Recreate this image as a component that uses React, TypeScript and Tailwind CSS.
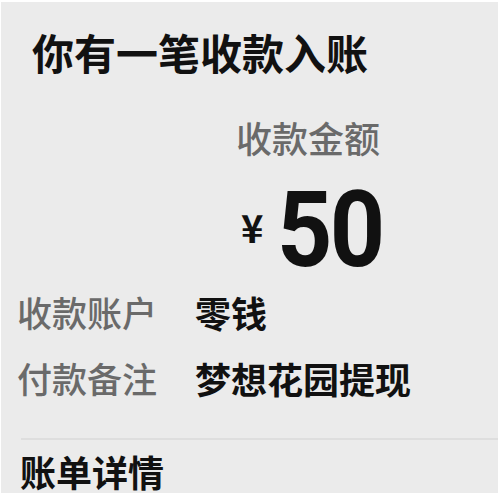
import React from "react";

const cjk = { fontFamily: '"Noto Sans CJK SC", "Noto Sans", sans-serif' };

export default function App() {
  return (
    <div className="w-[500px] h-[496px] bg-white">
      <div
        className="ml-[1px] mt-[2px] mr-[2px] h-[491px] bg-[#ebebeb] flex flex-col text-[#111111]"
        style={cjk}
      >
        <div className="pl-[31px] pt-[26px] text-[42px] leading-[48px] font-bold">
          你有一笔收款入账
        </div>

        <div className="pl-[235px] mt-[39px] text-[36px] leading-[44px] font-medium text-[#6a6a6a]">
          收款金额
        </div>

        <div className="pl-[240px] mt-[32px] h-[80px] flex items-center">
          <span className="mb-[8px] text-[38px] leading-none font-bold">¥</span>
          <span
            className="ml-[14px] text-[105px] leading-[80px] font-bold tracking-[-3px] inline-block origin-left scale-x-[0.92]"
            style={{ fontFamily: 'Roboto, "Liberation Sans", sans-serif' }}
          >
            50
          </span>
        </div>

        <div className="mt-[19px] flex flex-col gap-[22px] pl-[16px]">
          <div className="flex h-[44px] items-center">
            <span className="w-[178px] text-[35px] leading-[44px] font-medium text-[#6a6a6a]">收款账户</span>
            <span className="text-[36px] leading-[44px] font-bold">零钱</span>
          </div>
          <div className="flex h-[44px] items-center">
            <span className="w-[178px] text-[35px] leading-[44px] font-medium text-[#6a6a6a]">付款备注</span>
            <span className="text-[36px] leading-[44px] font-bold">梦想花园提现</span>
          </div>
        </div>

        <div className="mt-[38px] ml-[20px] h-[2px] bg-[#dedede]" />

        <div className="pl-[19px] mt-[13px] text-[36px] leading-[36px] font-bold">
          账单详情
        </div>
      </div>
    </div>
  );
}
